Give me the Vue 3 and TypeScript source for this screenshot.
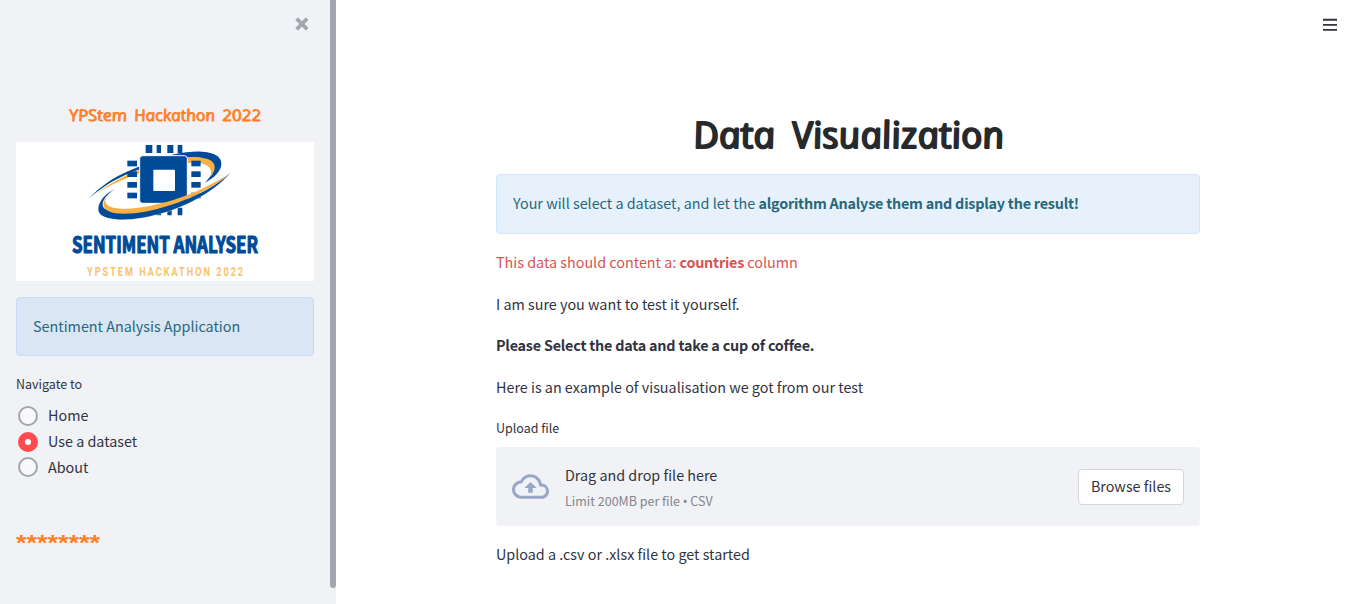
<script setup lang="ts">
import { ref } from 'vue'

const pages: string[] = ['Home', 'Use a dataset', 'About']
const current = ref<string>('Use a dataset')
const pinRows: number[] = [62, 94, 126, 158]
</script>

<template>
  <div class="app">
    <aside class="sidebar">
      <div class="sidebar-content">
        <div class="close-row">
          <svg class="close" width="14" height="14" viewBox="0 0 14 14">
            <path d="M1.600 1.600L12.200 12.200M12.200 1.600L1.600 12.200" />
          </svg>
        </div>
        <svg class="brand" width="298" height="30" viewBox="0 0 298 30">
          <g class="hand small">
            <text transform="translate(54 19) skewX(11)" textLength="58" lengthAdjust="spacingAndGlyphs">YPStem</text>
            <text transform="translate(119 19) skewX(11)" textLength="81" lengthAdjust="spacingAndGlyphs">Hackathon</text>
            <text transform="translate(207 19) skewX(11)" textLength="39" lengthAdjust="spacingAndGlyphs">2022</text>
          </g>
        </svg>
        <svg class="logo" width="298" height="139" viewBox="0 0 298 139">
          <rect width="298" height="139" fill="#fff" />
          <g transform="translate(64 -2) scale(.33333)">
            <g fill="#004a98">
              <path d="M197 15h20v24h-20zM230 15h13v24h-13zM262 15h18v24h-18zM293 15h14v24h-14z" />
              <path d="M230 203h13v23h-13zM262 203h13v23h-13zM293 203h14v23h-14z" />
              <path d="M27 175C80 120 130 97 205 69C265 43 325 32 366 35C410 38 426 54 424 74C421 96 403 112 375 128C409 93 410 67 372 56C320 43 240 64 175 89C115 111 70 137 27 175Z" />
            </g>
            <path d="M48 162C95 125 145 101 204 78C285 48 348 46 383 57C408 66 411 86 392 110C399 78 378 65 321 70C250 73 130 109 48 162Z" fill="#f9b044" />
            <g fill="#004a98">
              <rect v-for="y in pinRows" :key="'l' + y" x="142" :y="y" width="29" height="17" />
              <rect v-for="y in pinRows" :key="'r' + y" x="334" :y="y" width="28" height="17" />
            </g>
            <rect x="179" y="47" width="143" height="143" rx="9" fill="#004a98" stroke="#fff" stroke-width="3" />
            <rect x="220" y="89" width="65" height="64" rx="2" fill="#fff" />
            <path d="M104 147C73 170 61 190 73 205C112 230 220 211 300 184C360 164 407 137 453 97C408 151 331 194 257 217C190 237 127 246 83 234C51 226 49 205 62 183C71 168 83 158 104 147Z" fill="#004a98" stroke="#fff" stroke-width="1" />
            <path d="M86 165C68 182 76 198 101 203C154 213 235 196 306 171C362 150 407 127 448 101C398 145 329 175 269 196C202 219 119 230 87 214C65 204 65 184 86 165Z" fill="#f9b044" />
          </g>
          <text class="logo-name" x="56" y="110.500" textLength="186" lengthAdjust="spacingAndGlyphs">SENTIMENT ANALYSER</text>
          <text class="logo-sub" transform="translate(71 134) scale(.7 1)" textLength="223">YPSTEM HACKATHON 2022</text>
        </svg>
        <div class="info side-info">Sentiment Analysis Application</div>
        <div class="nav-label small-text">Navigate to</div>
        <div class="radios">
          <label v-for="page in pages" :key="page" class="radio" @click="current = page">
            <span class="dot" :class="{ on: current === page }"></span>
            <span class="radio-text">{{ page }}</span>
          </label>
        </div>
        <svg class="stars" width="120" height="30" viewBox="0 0 120 30">
          <text transform="translate(0 22) scale(1 .84)" textLength="84">********</text>
        </svg>
      </div>
      <div class="scroll-thumb"></div>
    </aside>

    <main class="main">
      <div class="menu-row">
        <svg width="14" height="14" viewBox="0 0 14 14" fill="#31333f">
          <path d="M0 .7h14v2H0zM0 6h14v1.800H0zM0 11h14v1.800H0z" />
        </svg>
      </div>
      <div class="column">
        <svg class="title" width="704" height="60" viewBox="0 0 704 60">
          <g class="hand big">
            <text transform="translate(199 34) skewX(11)" textLength="82" lengthAdjust="spacingAndGlyphs">Data</text>
            <text transform="translate(298 34) skewX(11)" textLength="212" lengthAdjust="spacingAndGlyphs">Visualization</text>
          </g>
        </svg>
        <div class="info main-info"><span>Your will select a dataset, and let the <b>algorithm Analyse them and display the result!</b></span></div>
        <div class="paragraphs">
          <p class="warn">This data should content a: <b>countries</b> column</p>
          <p>I am sure you want to test it yourself.</p>
          <p><b>Please Select the data and take a cup of coffee.</b></p>
          <p>Here is an example of visualisation we got from our test</p>
        </div>
        <div class="upload-label small-text">Upload file</div>
        <section class="dropzone">
          <svg class="cloud" width="37" height="37" viewBox="0 0 24 24">
            <path d="M19.350 10.040C18.670 6.590 15.640 4 12 4 9.110 4 6.600 5.640 5.350 8.040 2.340 8.360 0 10.910 0 14c0 3.310 2.690 6 6 6h13c2.760 0 5-2.240 5-5 0-2.640-2.050-4.780-4.650-4.960zM19 18H6c-2.210 0-4-1.790-4-4 0-2.050 1.530-3.760 3.560-3.970l1.070-.11.5-.95A5.469 5.469 0 0 1 12 6c2.620 0 4.880 1.860 5.390 4.430l.3 1.500 1.530.11A2.980 2.980 0 0 1 22 15c0 1.650-1.350 3-3 3zM8 13h2.550v3h2.900v-3H16l-4-4-4 4z" />
          </svg>
          <div class="drop-text">
            <span class="drop-main">Drag and drop file here</span>
            <span class="drop-limit small-text">Limit 200MB per file <span class="bullet">•</span> CSV</span>
          </div>
          <button class="browse">Browse files</button>
        </section>
        <p class="hint">Upload a .csv or .xlsx file to get started</p>
      </div>
    </main>
  </div>
</template>

<style>
body {
  margin: 0;
  overflow: hidden;
}
</style>

<style scoped>
.app {
  display: flex;
  width: 1357px;
  height: 604px;
  overflow: hidden;
  background: #fff;
  color: #31333f;
  font-family: "Noto Sans CJK SC", "Noto Sans", sans-serif;
  font-size: 14.350px;
  line-height: 25.600px;
}
.app b {
  letter-spacing: -.21px;
}
.sidebar {
  display: flex;
  flex: none;
  width: 336px;
  background: #f0f2f6;
}
.sidebar-content {
  display: flex;
  flex-direction: column;
  width: 298px;
  padding: 0 16px;
}
.scroll-thumb {
  width: 6px;
  height: 588px;
  border-radius: 0 0 3px 3px;
  background: #a5a5af;
}
.close-row {
  display: flex;
  justify-content: flex-end;
  height: 85px;
  padding: 17px 5px 0 0;
}
.close path {
  fill: none;
  stroke: #a4a5ae;
  stroke-width: 3.700;
}
.brand,
.logo,
.stars,
.title {
  display: block;
  flex: none;
  overflow: visible;
}
.brand {
  margin-bottom: 10px;
}
.hand {
  font-family: "Open Sans", sans-serif;
  font-style: italic;
  stroke-linejoin: round;
}
.small {
  font-size: 16px;
  font-weight: 400;
  fill: #ff7f27;
  stroke: #ff7f27;
  stroke-width: .8;
}
.big {
  font-size: 36.500px;
  font-weight: 400;
  fill: #262a2c;
  stroke: #262a2c;
  stroke-width: 1.900;
}
.logo-name {
  font-family: "Noto Sans CJK SC", sans-serif;
  font-size: 22px;
  font-weight: 700;
  fill: #004a98;
  stroke: #004a98;
  stroke-width: 1.200;
  stroke-linejoin: round;
}
.logo-sub {
  font-family: Roboto, sans-serif;
  font-size: 13px;
  font-weight: 700;
  fill: #f9c26d;
}
.info {
  box-sizing: border-box;
  display: flex;
  align-items: center;
  padding: 0 16px 2px;
  border: 1px solid #d0e6fa;
  border-radius: 4px;
  background: #e7f1fb;
  color: #26687c;
}
.side-info {
  height: 59px;
  margin-top: 16px;
  border-color: #c7dcf4;
  background: #dae6f3;
}
.small-text {
  font-size: 12.500px;
  line-height: 20px;
}
.nav-label {
  margin-top: 18px;
}
.radios {
  display: flex;
  flex-direction: column;
  margin-top: 9px;
}
.radio {
  display: flex;
  align-items: center;
  gap: 10px;
  height: 25.700px;
  padding-left: 2px;
}
.radio-text {
  padding-bottom: 1.600px;
}
.dot {
  box-sizing: border-box;
  width: 20px;
  height: 20px;
  border: 2px solid #a3a5ad;
  border-radius: 50%;
  background: #f9f9fb;
}
.dot.on {
  border: 7px solid #ff4b4b;
  background: #fff;
}
.stars {
  margin-top: 48px;
}
.stars text {
  font-family: "Liberation Sans", sans-serif;
  font-size: 27px;
  font-weight: 700;
  fill: #ff7f27;
}
.main {
  flex: 1;
}
.menu-row {
  display: flex;
  justify-content: flex-end;
  height: 96px;
  padding: 18px 20px 0 0;
}
.column {
  width: 704px;
  margin-left: 160px;
}
.main-info {
  height: 60px;
}
.paragraphs {
  display: flex;
  flex-direction: column;
  gap: 16px;
  padding-top: 15px;
}
p {
  margin: 0;
}
.warn {
  color: #d9534f;
}
.upload-label {
  margin-top: 19px;
}
.dropzone {
  display: flex;
  align-items: center;
  box-sizing: border-box;
  height: 79px;
  margin-top: 9px;
  padding: 0 16px;
  border-radius: 4px;
  background: #f0f2f6;
}
.cloud path {
  fill: #98a7c8;
}
.drop-text {
  display: flex;
  flex: 1;
  flex-direction: column;
  gap: 3px;
  margin-left: 16px;
}
.drop-limit {
  color: #84858d;
}
.bullet {
  font-family: "Noto Sans", sans-serif;
}
.browse {
  box-sizing: border-box;
  width: 106px;
  height: 36px;
  padding: 0 0 2px;
  border: 1px solid #d5d6da;
  border-radius: 4px;
  background: #fff;
  color: inherit;
  font: inherit;
}
.hint {
  margin-top: 15px;
}
</style>
